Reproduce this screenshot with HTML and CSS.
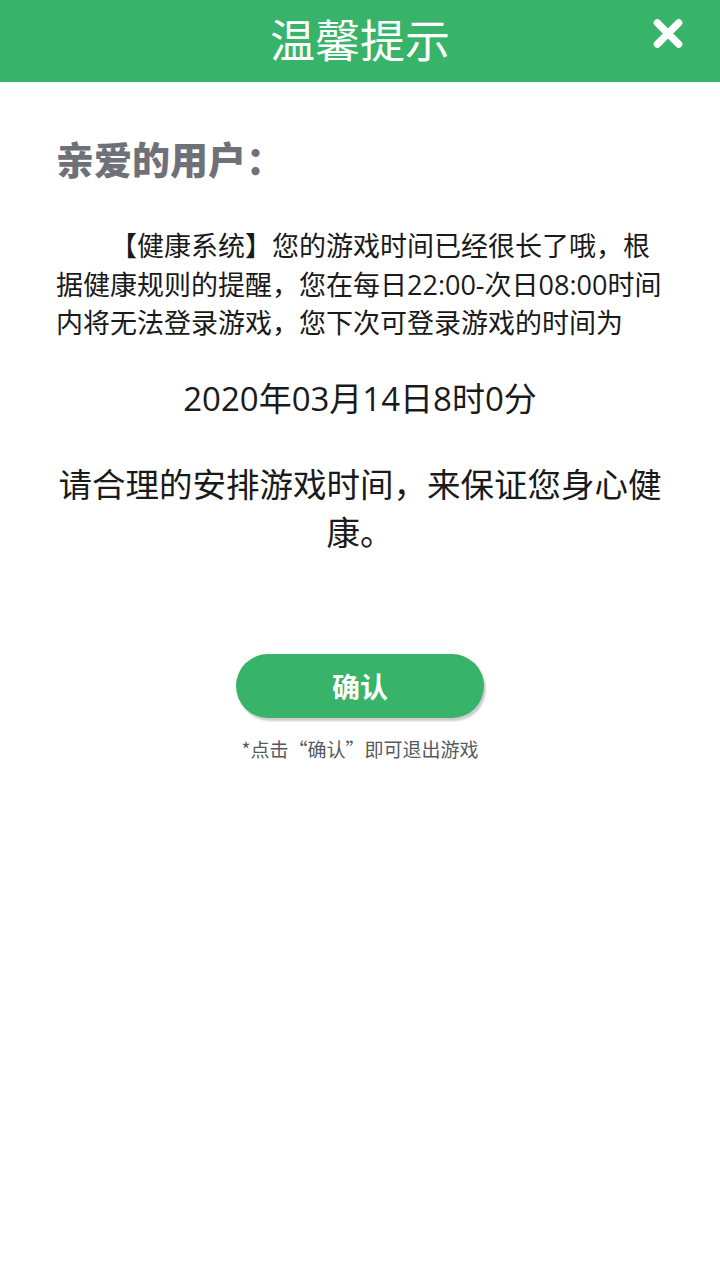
FILE: index.html
```html
<!DOCTYPE html>
<html lang="zh-CN">
<head>
    <meta charset="UTF-8">
    <meta name="viewport" content="width=device-width, initial-scale=1.0">
    <title>温馨提示</title>
    <link rel="stylesheet" href="styles.css">
</head>
<body>
    <div class="header">
        <h1 class="title">温馨提示</h1>
        <button class="close-button" title="关闭">
            <svg class="close-icon" viewBox="0 0 32 32">
                <path d="M5 5 L27 27 M27 5 L5 27"></path>
            </svg>
        </button>
    </div>

    <div class="content">
        <h2 class="greeting">亲爱的用户：</h2>
        <p class="message">【健康系统】您的游戏时间已经很长了哦，根据健康规则的提醒，您在每日22:00-次日08:00时间内将无法登录游戏，您下次可登录游戏的时间为</p>
        <p class="date">2020年03月14日8时0分</p>
        <p class="advice">请合理的安排游戏时间，来保证您身心健康。</p>

        <div class="actions">
            <button class="confirm-button">确认</button>
            <p class="note">*点击“确认”即可退出游戏</p>
        </div>
    </div>
</body>
</html>
```

FILE: styles.css
```css
* {
    margin: 0;
    padding: 0;
    box-sizing: border-box;
}

body {
    font-family: "Open Sans", "Noto Sans CJK SC", sans-serif;
    background-color: #ffffff;
    color: #1a1a1a;
    width: 720px;
    min-height: 1280px;
}

.header {
    position: relative;
    height: 82px;
    padding-bottom: 5px;
    background-color: #38b36a;
    display: flex;
    align-items: center;
    justify-content: center;
}

.title {
    font-family: "Noto Sans CJK SC", sans-serif;
    font-size: 45px;
    font-weight: 400;
    color: #ffffff;
    line-height: 1;
}

.close-button {
    position: absolute;
    top: 18px;
    right: 35px;
    width: 34px;
    height: 31px;
    background: none;
    border: none;
    display: flex;
    align-items: center;
    justify-content: center;
}

.close-icon {
    width: 34px;
    height: 31px;
    stroke: #ffffff;
    stroke-width: 7.5;
    stroke-linecap: round;
    fill: none;
}

.content {
    padding: 52px 56px 0 56px;
}

.greeting {
    font-family: "Noto Sans CJK SC", sans-serif;
    font-size: 38px;
    font-weight: 900;
    color: #6e7278;
    line-height: 48px;
    margin-bottom: 45px;
}

.message {
    font-size: 27px;
    line-height: 38.5px;
    text-indent: 2em;
    color: #1a1a1a;
}

.date {
    font-size: 33px;
    line-height: 44px;
    text-align: center;
    margin-top: 34px;
}

.advice {
    font-size: 33.5px;
    line-height: 48px;
    text-align: center;
    margin-top: 39px;
}

.actions {
    display: flex;
    flex-direction: column;
    align-items: center;
    margin-top: 98px;
}

.confirm-button {
    width: 248px;
    height: 64px;
    border: none;
    border-radius: 32px;
    background-color: #38b36a;
    box-shadow: 2px 3px 2px rgba(0, 0, 0, 0.2);
    color: #ffffff;
    font-family: "Noto Sans CJK SC", sans-serif;
    font-size: 28px;
    font-weight: 700;
    cursor: pointer;
}

.note {
    margin-top: 18px;
    font-family: "Noto Sans CJK SC", sans-serif;
    font-size: 19px;
    line-height: 26px;
    color: #555a60;
}
```
